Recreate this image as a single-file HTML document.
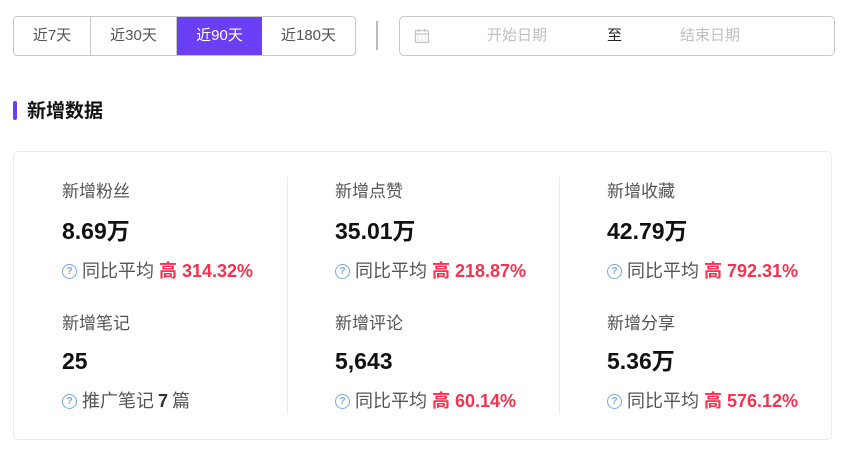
<!DOCTYPE html>
<html><head><meta charset="utf-8"><style>
*{margin:0;padding:0;box-sizing:border-box}
body{width:849px;height:449px;background:#fff;font-family:"Liberation Sans","Noto Sans CJK SC",sans-serif;position:relative;overflow:hidden}
.a{position:absolute;line-height:1.2}
.btns{left:13px;top:16px;width:343px;height:40px;border:1px solid #c8c8c8;border-radius:4px;display:flex;overflow:hidden}
.btns div{height:100%;display:flex;align-items:center;justify-content:center;font-size:15px;color:#555;border-right:1px solid #c8c8c8}
.btns div:last-child{border-right:none}
.btns .on{background:#6a3ff5;color:#fff;border-right:none}
.date{left:399px;top:16px;width:436px;height:40px;border:1px solid #c8c8c8;border-radius:5px}
.ph{color:#c0c0c0;font-size:15px;top:10px}
.lab{font-size:17px;color:#555}
.val{font-size:23px;font-weight:bold;color:#111}
.st{font-size:18px;color:#555;display:flex;align-items:center;white-space:nowrap}
.st b{color:#f5334f;margin-left:5px}
.q{flex-shrink:0;width:15px;height:15px;border:1.5px solid #7aa7f0;border-radius:50%;color:#7aa7f0;font-size:10px;font-weight:bold;display:inline-flex;align-items:center;justify-content:center;margin-right:5px;line-height:1}
.vl{width:1px;background:#eaeaea;top:177px;height:237px}
</style></head><body>
<div class="a btns">
<div style="width:77px">近7天</div><div style="width:86px">近30天</div><div class="on" style="width:85px">近90天</div><div style="flex:1">近180天</div>
</div>
<div class="a" style="left:376px;top:21px;width:2px;height:29px;background:#bbb"></div>
<div class="a date">
<svg class="a" style="left:14px;top:11px" width="16" height="16" viewBox="0 0 16 16" fill="none" stroke="#c4c4c4" stroke-width="1.3"><rect x="1.5" y="2.5" width="13" height="12" rx="1"/><line x1="1.5" y1="6" x2="14.5" y2="6"/><line x1="5" y1="1" x2="5" y2="4"/><line x1="11" y1="1" x2="11" y2="4"/><path d="M4 9h1M7.5 9h1M11 9h1M4 12h1M7.5 12h1M11 12h1"/></svg>
<div class="a ph" style="left:87px">开始日期</div>
<div class="a" style="left:207px;top:10px;font-size:15px;color:#222">至</div>
<div class="a ph" style="left:280px">结束日期</div>
</div>
<div class="a" style="left:13px;top:101px;width:4px;height:19px;background:#6a3ff5;border-radius:2px"></div>
<div class="a" style="left:27px;top:101px;font-size:19px;font-weight:bold;color:#111">新增数据</div>
<div class="a" style="left:13px;top:151px;width:819px;height:289px;border:1px solid #ececec;border-radius:5px"></div>
<div class="a vl" style="left:287px"></div>
<div class="a vl" style="left:559px"></div>

<div class="a lab" style="left:62px;top:182px">新增粉丝</div>
<div class="a val" style="left:62px;top:218px">8.69万</div>
<div class="a st" style="left:62px;top:261px"><span class="q">?</span>同比平均<b>高 314.32%</b></div>
<div class="a lab" style="left:335px;top:182px">新增点赞</div>
<div class="a val" style="left:335px;top:218px">35.01万</div>
<div class="a st" style="left:335px;top:261px"><span class="q">?</span>同比平均<b>高 218.87%</b></div>
<div class="a lab" style="left:607px;top:182px">新增收藏</div>
<div class="a val" style="left:607px;top:218px">42.79万</div>
<div class="a st" style="left:607px;top:261px"><span class="q">?</span>同比平均<b>高 792.31%</b></div>

<div class="a lab" style="left:62px;top:314px">新增笔记</div>
<div class="a val" style="left:62px;top:348px">25</div>
<div class="a st" style="left:62px;top:391px"><span class="q">?</span>推广笔记 <span style="font-weight:bold;color:#333;margin:0 4px">7</span> 篇</div>
<div class="a lab" style="left:335px;top:314px">新增评论</div>
<div class="a val" style="left:335px;top:348px">5,643</div>
<div class="a st" style="left:335px;top:391px"><span class="q">?</span>同比平均<b>高 60.14%</b></div>
<div class="a lab" style="left:607px;top:314px">新增分享</div>
<div class="a val" style="left:607px;top:348px">5.36万</div>
<div class="a st" style="left:607px;top:391px"><span class="q">?</span>同比平均<b>高 576.12%</b></div>
</body></html>
